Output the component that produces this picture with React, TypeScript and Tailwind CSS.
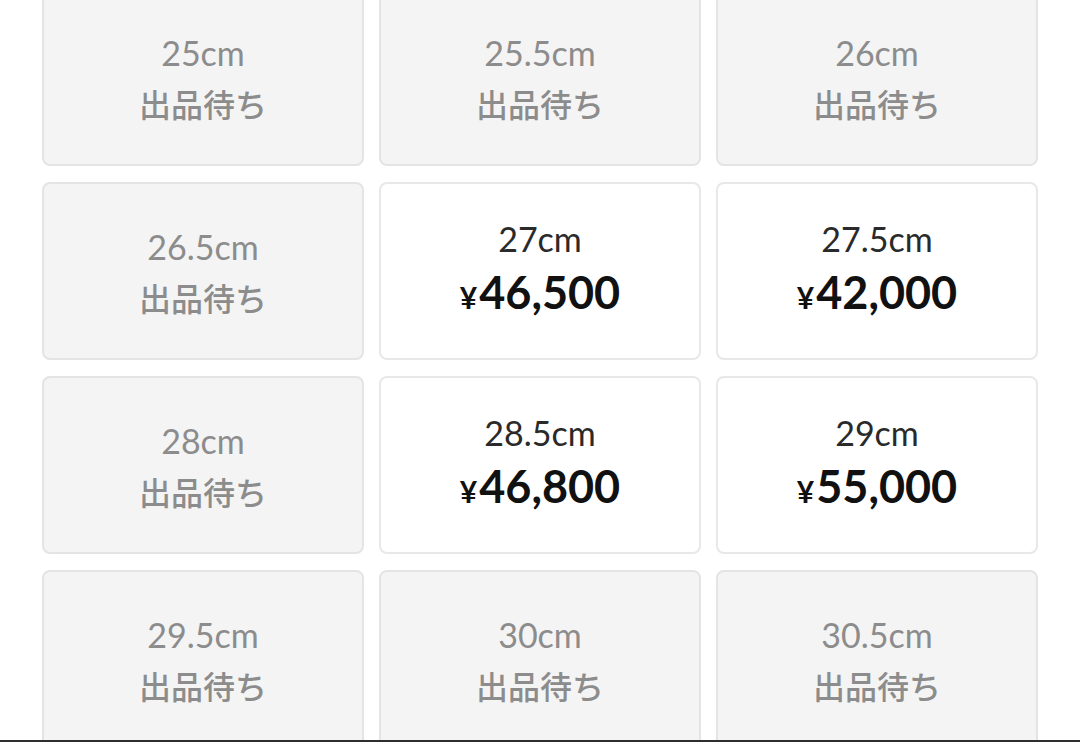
const sizes = [
  { size: "25cm", price: null },
  { size: "25.5cm", price: null },
  { size: "26cm", price: null },
  { size: "26.5cm", price: null },
  { size: "27cm", price: "46,500" },
  { size: "27.5cm", price: "42,000" },
  { size: "28cm", price: null },
  { size: "28.5cm", price: "46,800" },
  { size: "29cm", price: "55,000" },
  { size: "29.5cm", price: null },
  { size: "30cm", price: null },
  { size: "30.5cm", price: null },
];

const font = { fontFamily: "Lato, 'Noto Sans CJK JP', sans-serif" };
const jp = { fontFamily: "'Noto Sans CJK JP', sans-serif" };

const SizeCard = ({ size, price }: { size: string; price: string | null }) => {
  if (!price) {
    return (
      <div className="flex h-[178px] flex-col items-center justify-center rounded-lg border-2 border-[#e4e4e4] bg-[#f4f4f4] pt-[2px] text-[#8c8c8c]">
        <div className="text-[34px] leading-[40px]">{size}</div>
        <div className="mt-[10px] text-[32px] font-medium leading-[40px]" style={jp}>
          出品待ち
        </div>
      </div>
    );
  }
  return (
    <div className="flex h-[178px] flex-col items-center justify-center rounded-lg border-2 border-[#e8e8e8] bg-white pb-[4px]">
      <div className="text-[34px] leading-[40px] text-[#2a2a2a]">{size}</div>
      <div className="mt-[11px] flex items-baseline font-bold leading-[44px] text-[#111]">
        <span className="mr-[2px] text-[30px]">¥</span>
        <span className="text-[45px]">{price}</span>
      </div>
    </div>
  );
};

export default function App() {
  return (
    <div className="relative h-[742px] w-[1080px] overflow-hidden bg-white" style={font}>
      <div className="-mt-[12px] grid grid-cols-3 gap-x-[15px] gap-y-[16px] px-[42px]">
        {sizes.map((s) => (
          <SizeCard key={s.size} size={s.size} price={s.price} />
        ))}
      </div>
      <div className="absolute bottom-0 left-0 h-[2px] w-full bg-[#2e2e2e]" />
    </div>
  );
}
